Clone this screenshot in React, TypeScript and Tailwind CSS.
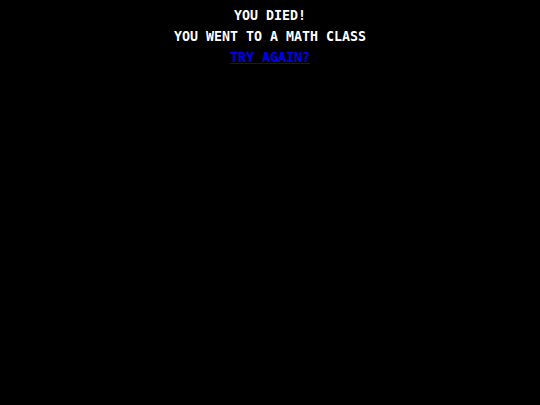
export default function App() {
  return (
    <div className="min-h-[405px] w-full bg-black text-white flex flex-col items-center pt-[5px] font-['DejaVu_Sans_Mono',monospace] font-bold text-[13.3px] leading-[21px] uppercase">
      <div>YOU DIED!</div>
      <div>YOU WENT TO A MATH CLASS</div>
      <a href="#" className="text-[#0000ee] underline">TRY AGAIN?</a>
    </div>
  );
}
